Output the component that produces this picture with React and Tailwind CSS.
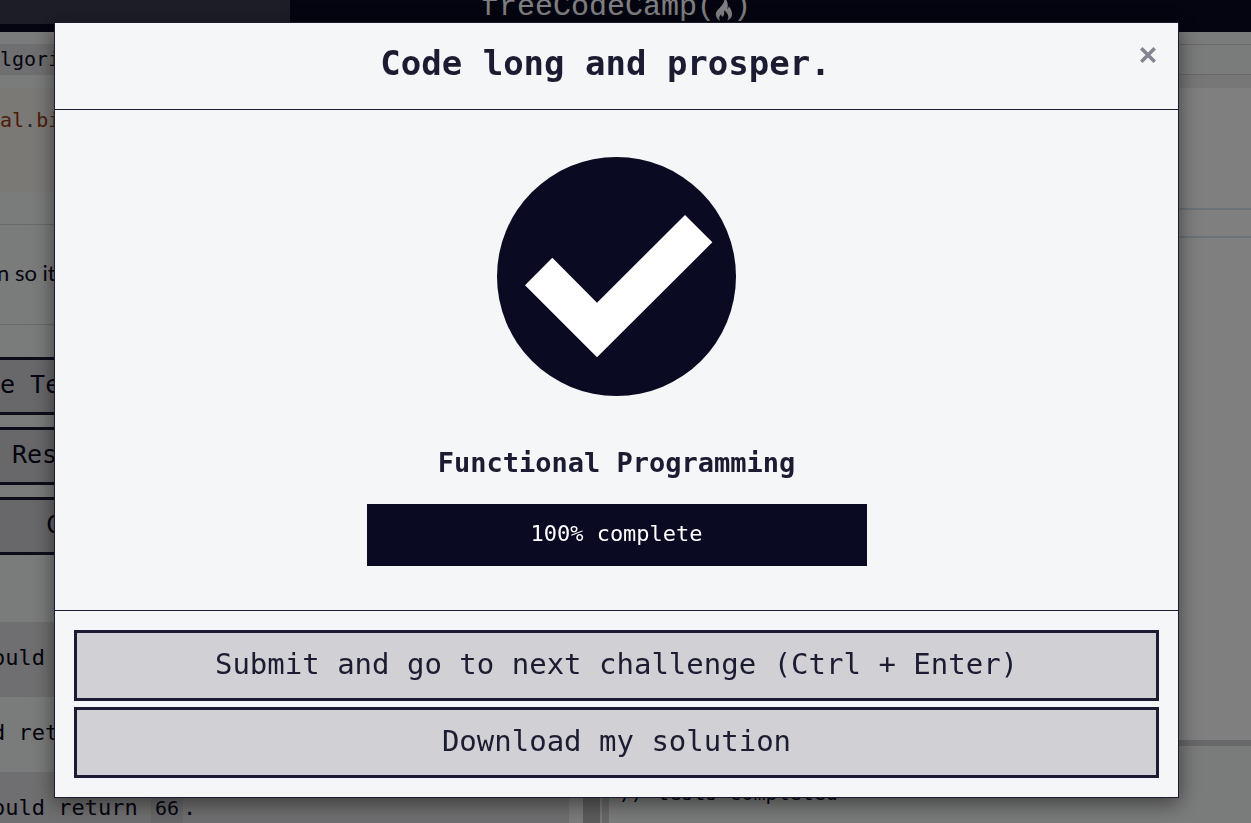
const MONO = "font-['DejaVu_Sans_Mono',monospace]";

function PanelButton({ children, className }) {
  return (
    <button
      type="button"
      className={`h-[58px] w-full border-y-[3px] border-r-[3px] border-[#1b1b32] bg-[#d0d0d5] pb-1 text-left text-[25px] leading-none ${className}`}
    >
      {children}
    </button>
  );
}

function Header() {
  return (
    <header className="flex h-14 shrink-0 items-center bg-[#0a0a23]">
      <input
        type="search"
        aria-label="Search"
        className="h-10 w-[290px] shrink-0 bg-[#3b3b4f]"
      />
      <a
        href="#home"
        className="ml-[191px] flex items-center pt-1.5 font-['Liberation_Mono',monospace] text-[30px] leading-8 text-white"
      >
        <span>freeCodeCamp(</span>
        <svg viewBox="0 0 18 24" className="mt-1 h-6 w-[18px]" fill="currentColor" aria-hidden="true">
          <path d="M8.500 0c1.500 3 .8 5.200-1.600 8.300C4.200 11.700.8 14 .8 17.500c0 3 1.800 5 4.400 6.200-1.700-2.500-.9-4.600.9-6.500.2 1.500.7 2.300 1.700 2.500 1.600-1.900 1.700-4.200 1.100-6.400 2.600 1.700 4.600 4.400 4.400 7.200-.1 1.300-.6 2.300-1.300 3.200 3.300-1.300 5.100-3.700 5.100-6.700 0-3.200-2.200-5.600-3.200-7.900-.2 1.400-.6 2.400-1.500 2.900C13.500 7.500 12.300 2.500 8.500 0Z" />
        </svg>
        <span>)</span>
      </a>
    </header>
  );
}

function Instructions() {
  return (
    <section className={`w-[569px] shrink-0 overflow-hidden text-[#0a0a23] ${MONO}`}>
      <div className="pt-3">
        <div className="h-[31px] bg-[#dfdfe2] text-[20px] leading-[31px]">lgori</div>
      </div>
      <pre className={`mt-[13px] h-[105px] bg-[#f5f2ed] pt-4 text-[20px] leading-8 text-[#99380d] ${MONO}`}>
        al<span className="text-[#44546a]">.</span>bi
      </pre>
      <div className="mt-[31px] h-[101px] border-y border-[#d0d0d5] pt-[30px] indent-[-3px] font-[Lato,sans-serif] text-[22px] leading-[35px]">
        n so it
      </div>
      <div className="mt-8 flex flex-col gap-3">
        <PanelButton className="pl-0">e Te</PanelButton>
        <PanelButton className="pl-3">Res</PanelButton>
        <PanelButton className="pl-[46px]">C</PanelButton>
      </div>
      <ul className="mt-[67px] indent-[-8px] text-[22px] leading-[72px]">
        <li className="h-[75px] bg-[#dfdfe2]">ould</li>
        <li className="h-[75px]">d ret</li>
        <li className="h-[75px] bg-[#dfdfe2]">
          ould return <code className={`bg-[#d0d0d5] px-1 py-1 text-[20px] ${MONO}`}>66</code>.
        </li>
      </ul>
    </section>
  );
}

function EditorPane() {
  return (
    <section className="flex min-w-0 flex-1 flex-col">
      <div className="mt-3 h-[31px] border-y border-[#d0d0d5]" />
      <div className="h-[13px] bg-[#eeeef0]" />
      <div className="h-[652px] bg-white pt-[120px]">
        <div className="h-[30px] border-y-2 border-[#d5e4ee]" />
      </div>
      <div className="h-1.5 bg-[#d0d0d5]" />
      <pre className={`pt-8 pl-3 text-[20px] leading-[30px] text-[#0a0a23] ${MONO}`}>{"// tests completed"}</pre>
    </section>
  );
}

function CompletionDialog() {
  return (
    <div
      role="dialog"
      aria-modal="true"
      aria-labelledby="dialog-title"
      className={`w-full border border-[#1b1b32] bg-[#f5f6f7] text-[#1b1b32] shadow-[0_5px_20px_rgba(0,0,0,0.5)] ${MONO}`}
    >
      <div className="flex items-start border-b border-[#1b1b32] py-5 pr-[18px] pl-5">
        <h2 id="dialog-title" className="flex-1 pb-1.5 text-center text-[34px] leading-10 font-bold">
          Code long and prosper.
        </h2>
        <button type="button" aria-label="Close" className="flex h-6 w-6 items-center justify-center text-[#858591]">
          <svg viewBox="0 0 18 18" className="h-[18px] w-[18px]" fill="none" stroke="currentColor" strokeWidth="3.600" aria-hidden="true">
            <path d="M2.300 2.300l13.400 13.400M15.700 2.300L2.300 15.700" />
          </svg>
        </button>
      </div>
      <div className="flex flex-col items-center px-5 pt-[47px] pb-11">
        <svg viewBox="50 51 717 717" className="h-[239px] w-[239px]" role="img" aria-label="Passed">
          <circle cx="408.500" cy="409.500" r="358.500" fill="#0a0a23" />
          <path d="M614 225L696 307L350 652L134 436L216 353L350 488Z" fill="#fff" />
        </svg>
        <h3 className="mt-[49px] text-[27px] leading-9 font-bold">Functional Programming</h3>
        <div className="mt-[23px] w-[500px] max-w-full bg-[#0a0a23] pb-0.5 text-center text-[22px] leading-[60px] text-white">
          100% complete
        </div>
      </div>
      <div className="flex flex-col gap-1.5 border-t border-[#1b1b32] p-[19px]">
        <button type="button" className="h-[71px] border-[3px] border-[#1b1b32] bg-[#d0d0d5] pb-0.5 text-[29px]">
          Submit and go to next challenge (Ctrl + Enter)
        </button>
        <button type="button" className="h-[71px] border-[3px] border-[#1b1b32] bg-[#d0d0d5] pb-0.5 text-[29px]">
          Download my solution
        </button>
      </div>
    </div>
  );
}

export default function App() {
  return (
    <div className="h-screen overflow-hidden bg-[#f5f6f7]">
      <div className="-mt-6 flex flex-col" aria-hidden="true" inert>
        <Header />
        <main className="flex">
          <Instructions />
          <div className="ml-3.5 w-[17px] shrink-0 bg-[#b8b8b8]" />
          <div className="ml-0.5 w-[7px] shrink-0 bg-[#d0d0d5]" />
          <EditorPane />
        </main>
      </div>
      <div className="fixed inset-0 overflow-hidden bg-black/50 pt-[22px] pr-[72px] pl-[54px]">
        <CompletionDialog />
      </div>
    </div>
  );
}
